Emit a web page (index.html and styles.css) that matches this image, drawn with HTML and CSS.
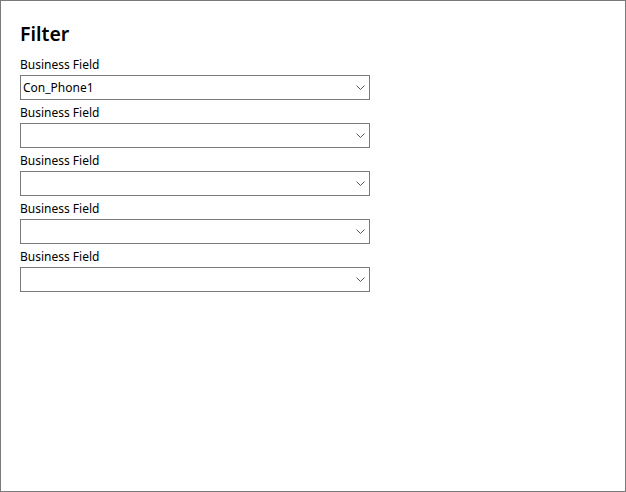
FILE: index.html
```html
<!DOCTYPE html>
<html>
<head>
<meta charset="utf-8">
<link rel="stylesheet" href="styles.css">
</head>
<body>
<div class="frame">
  <h1 class="title">Filter</h1>
  <div class="fields">
    <div class="field">
      <div class="label">Business Field</div>
      <div class="select"><span class="value">Con_Phone1</span><svg class="chev" width="9" height="5" viewBox="0 0 9 5"><path d="M0.5 0.5 L4.5 4.5 L8.5 0.5" fill="none" stroke="#555" stroke-width="1"/></svg></div>
    </div>
    <div class="field">
      <div class="label">Business Field</div>
      <div class="select"><span class="value"></span><svg class="chev" width="9" height="5" viewBox="0 0 9 5"><path d="M0.5 0.5 L4.5 4.5 L8.5 0.5" fill="none" stroke="#555" stroke-width="1"/></svg></div>
    </div>
    <div class="field">
      <div class="label">Business Field</div>
      <div class="select"><span class="value"></span><svg class="chev" width="9" height="5" viewBox="0 0 9 5"><path d="M0.5 0.5 L4.5 4.5 L8.5 0.5" fill="none" stroke="#555" stroke-width="1"/></svg></div>
    </div>
    <div class="field">
      <div class="label">Business Field</div>
      <div class="select"><span class="value"></span><svg class="chev" width="9" height="5" viewBox="0 0 9 5"><path d="M0.5 0.5 L4.5 4.5 L8.5 0.5" fill="none" stroke="#555" stroke-width="1"/></svg></div>
    </div>
    <div class="field">
      <div class="label">Business Field</div>
      <div class="select"><span class="value"></span><svg class="chev" width="9" height="5" viewBox="0 0 9 5"><path d="M0.5 0.5 L4.5 4.5 L8.5 0.5" fill="none" stroke="#555" stroke-width="1"/></svg></div>
    </div>
  </div>
</div>
</body>
</html>
```

FILE: styles.css
```css
html, body {
  margin: 0;
  padding: 0;
  background: #fff;
}
.frame {
  box-sizing: border-box;
  width: 626px;
  height: 492px;
  border: 1px solid #7a7a7a;
  padding: 19px 19px;
  font-family: "Noto Sans", "Open Sans", sans-serif;
  color: #000;
}
.title {
  margin: 0;
  font-size: 19.5px;
  font-weight: 600;
  line-height: 28px;
  height: 35px;
}
.fields {
  display: flex;
  flex-direction: column;
  gap: 3px;
}
.field {
  display: flex;
  flex-direction: column;
}
.label {
  font-size: 12px;
  line-height: 20px;
  height: 20px;
}
.select {
  box-sizing: border-box;
  width: 350px;
  height: 25px;
  border: 1px solid #7a7a7a;
  display: flex;
  align-items: center;
  justify-content: space-between;
  padding: 0 4px 0 2px;
}
.value {
  font-size: 12px;
  line-height: 16px;
}
.chev {
  display: block;
}
```
